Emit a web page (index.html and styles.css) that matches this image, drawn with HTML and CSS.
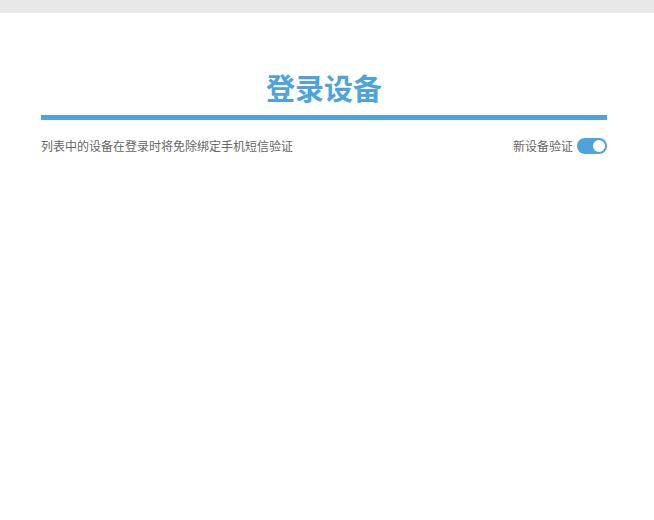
FILE: index.html
```html
<!DOCTYPE html>
<html lang="zh-CN">
<head>
<meta charset="utf-8">
<title>登录设备</title>
<link rel="stylesheet" href="styles.css">
</head>
<body>
<div class="topbar"></div>
<main class="main">
  <h1 class="title">登录设备</h1>
  <div class="row">
    <span class="desc">列表中的设备在登录时将免除绑定手机短信验证</span>
    <label class="verify">
      <span class="verify-label">新设备验证</span>
      <span class="switch"><span class="knob"></span></span>
    </label>
  </div>
</main>
</body>
</html>
```
FILE: styles.css
```css
html, body {
  margin: 0;
  padding: 0;
  background: #ffffff;
}
body {
  font-family: "Noto Sans CJK SC", "Noto Sans", sans-serif;
  color: #666666;
}
.topbar {
  height: 13px;
  background: #e8e8e8;
}
.main {
  padding: 0 47px 0 41px;
}
.title {
  margin: 54px 0 0;
  height: 40px;
  line-height: 40px;
  font-size: 29px;
  font-weight: 700;
  color: #4ea3dc;
  text-align: center;
  border-bottom: 5px solid #4ea3dc;
  padding-bottom: 8px;
}
.row {
  margin-top: 18px;
  display: flex;
  justify-content: space-between;
  align-items: center;
  height: 16px;
  font-size: 12px;
  line-height: 16px;
}
.verify {
  display: flex;
  align-items: center;
  gap: 4px;
}
.switch {
  width: 30px;
  height: 16px;
  border-radius: 8px;
  background: #4ea3dc;
  display: flex;
  align-items: center;
  justify-content: flex-end;
  padding: 0 2px;
  box-sizing: border-box;
}
.knob {
  width: 12px;
  height: 12px;
  border-radius: 50%;
  background: #ffffff;
}
```
